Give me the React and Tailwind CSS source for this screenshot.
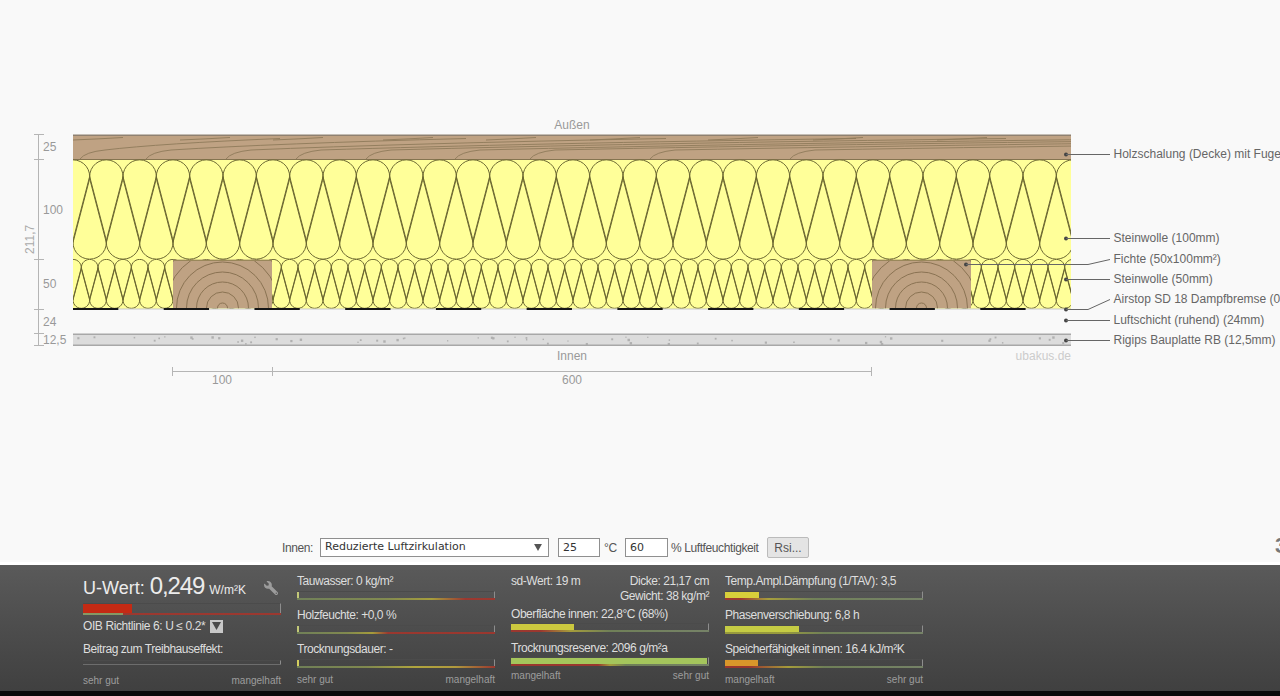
import React from "react";
import { FaWrench } from "react-icons/fa";

const L = 73, R = 1071;
const range = (n) => Array.from({ length: n }, (_, i) => i);

function tearDown(cx, r, cy, tip) {
  const s = r / (tip - cy);
  const c = Math.sqrt(1 - s * s);
  return `M${cx - r * c} ${cy + r * s} A${r} ${r} 0 1 1 ${cx + r * c} ${cy + r * s} L${cx} ${tip} Z`;
}
function tearUp(cx, r, cy, tip) {
  const s = r / (cy - tip);
  const c = Math.sqrt(1 - s * s);
  return `M${cx - r * c} ${cy - r * s} A${r} ${r} 0 1 0 ${cx + r * c} ${cy - r * s} L${cx} ${tip} Z`;
}

function rand(seed) {
  const x = Math.sin(seed * 12.9898) * 43758.5453;
  return x - Math.floor(x);
}

const grainLong = [
  [80, 200], [146, 320], [226, 440], [296, 560], [366, 640],
  [455, 720], [530, 820], [650, 900], [790, 1000],
].map(([x0, span]) => {
  const end = x0 + span;
  return `M${x0} 159 Q${x0 + 5} 152 ${x0 + 25} 150 Q${x0 + span * 0.4} 143.5 ${end} 138.5`;
});
const grainShort = [123, 230, 323, 433, 536, 640, 758, 863, 987].map((e) => `M${e - 50} 140 Q${e - 25} 139 ${e} 137.5`);

function Stud({ x }) {
  const cx = x + 49.5;
  return (
    <g clipPath={`url(#stud${x})`}>
      <rect x={x} y="259.5" width="99" height="49" fill="#bfa283" />
      {[5, 16, 26, 36, 46, 57, 68].map((r) => (
        <circle key={r} cx={cx} cy="308" r={r} fill="none" stroke="#8a7353" strokeWidth="1" />
      ))}
      <rect x={x} y="259.5" width="99" height="1.5" fill="#99875a" />
    </g>
  );
}

function Diagram() {
  const top100 = range(31).map((i) => L + (i * 100) / 3);
  const bot100 = range(30).map((i) => L + 16.67 + (i * 100) / 3);
  const top50 = range(61).map((i) => L + (i * 50) / 3);
  const bot50 = range(60).map((i) => L + 8.33 + (i * 50) / 3);
  const dashes = range(11).map((i) => L + i * 90.73);
  const dots = range(66).map((i) => ({
    x: L + 4 + rand(i + 1) * 990,
    y: 336 + rand(i + 50) * 7.5,
    s: 1.2 + rand(i + 99) * 1.3,
  }));
  const labels = [
    ["Holzschalung (Decke) mit Fuge", 154, 1066, 154.5],
    ["Steinwolle (100mm)", 238, 1066, 238.5],
    ["Steinwolle (50mm)", 279, 1066, 279.5],
    ["Luftschicht (ruhend) (24mm)", 320, 1066, 320.5],
    ["Rigips Bauplatte RB (12,5mm)", 340, 1066, 340.5],
  ];
  const dims = [
    ["25", 147],
    ["100", 210],
    ["50", 284],
    ["24", 322],
  ];
  return (
    <svg width="1280" height="400" viewBox="0 0 1280 400" className="block shrink-0 text-xs">
      <defs>
        <clipPath id="c100"><rect x={L} y="159.5" width={R - L} height="100.5" /></clipPath>
        <clipPath id="c50"><rect x={L} y="259" width={R - L} height="50" /></clipPath>
        <clipPath id="stud173"><rect x="173" y="259.5" width="99" height="49" /></clipPath>
        <clipPath id="stud872"><rect x="872" y="259.5" width="99" height="49" /></clipPath>
        <clipPath id="wood"><rect x={L} y="135" width={R - L} height="25" /></clipPath>
      </defs>

      <text x="572" y="129" textAnchor="middle" fill="#999">Außen</text>

      {/* Holzschalung */}
      <rect x={L} y="135" width={R - L} height="25" fill="#bfa283" />
      <g clipPath="url(#wood)" fill="none" stroke="#8f7b5a" strokeWidth="0.9">
        {grainLong.map((d, i) => <path key={i} d={d} />)}
        {grainShort.map((d, i) => <path key={i} d={d} />)}
      </g>
      <rect x={L} y="134.5" width={R - L} height="1.5" fill="#8f8171" />
      <rect x={L} y="159" width={R - L} height="1" fill="#857450" />

      {/* Steinwolle 100 */}
      <rect x={L} y="160" width={R - L} height="100" fill="#ffff99" />
      <g clipPath="url(#c100)" fill="none" stroke="#6b6732" strokeWidth="1">
        {top100.map((x) => <path key={x} d={tearDown(x, 16.67, 176.5, 242.5)} />)}
        {bot100.map((x) => <path key={x} d={tearUp(x, 16.67, 242.5, 176.5)} />)}
      </g>

      {/* Steinwolle 50 */}
      <rect x={L} y="259" width={R - L} height="50" fill="#ffff99" />
      <g clipPath="url(#c50)" fill="none" stroke="#6b6732" strokeWidth="1">
        {top50.map((x) => <path key={x} d={tearDown(x, 8.33, 267.7, 300)} />)}
        {bot50.map((x) => <path key={x} d={tearUp(x, 8.33, 300, 267.7)} />)}
      </g>
      <Stud x={173} />
      <Stud x={872} />

      {/* Dampfbremse */}
      <rect x={L} y="308.5" width={R - L} height="1" fill="#c9c9c9" />
      {dashes.map((x) => <rect key={x} x={x} y="308" width="45.3" height="2" fill="#161616" />)}

      {/* Gipsplatte */}
      <rect x={L} y="334" width={R - L} height="12" fill="#dcdcdc" />
      {dots.map((d, i) => <rect key={i} x={d.x} y={d.y} width={d.s} height={d.s} fill="#b0b0b0" />)}
      <rect x={L} y="333.5" width={R - L} height="1.5" fill="#a8a8a8" />
      <rect x={L} y="344.5" width={R - L} height="1.5" fill="#a8a8a8" />

      {/* Höhenmaße */}
      <line x1="38.5" y1="134" x2="38.5" y2="346" stroke="#b5b5b5" />
      {[134.5, 159.5, 259.5, 309.5, 333.5, 345.5].map((y) => (
        <line key={y} x1="34" y1={y} x2="44" y2={y} stroke="#b5b5b5" />
      ))}
      {dims.map(([t, y]) => <text key={t} x="43" y={y + 4} fill="#999">{t}</text>)}
      <text x="43" y="344" fill="#999">12,5</text>
      <text x="0" y="0" fill="#aaa" transform="translate(34 254) rotate(-90)">211,7</text>

      <text x="572" y="360" textAnchor="middle" fill="#999">Innen</text>
      <text x="1071" y="360" textAnchor="end" fill="#ccc">ubakus.de</text>

      {/* Breitenmaße */}
      <line x1="172" y1="371.5" x2="872" y2="371.5" stroke="#b5b5b5" />
      {[172.5, 272.5, 871.5].map((x) => <line key={x} x1={x} y1="367" x2={x} y2="376" stroke="#b5b5b5" />)}
      <text x="222" y="384" textAnchor="middle" fill="#999">100</text>
      <text x="572" y="384" textAnchor="middle" fill="#999">600</text>

      {/* Beschriftung */}
      {labels.map(([t, y, x, ly]) => (
        <g key={t}>
          <circle cx={x} cy={ly} r="2" fill="#444" />
          <line x1={x} y1={ly} x2="1110" y2={ly} stroke="#666" />
          <text x="1113.5" y={y + 4} fill="#666">{t}</text>
        </g>
      ))}
      <circle cx="966" cy="264.5" r="2" fill="#444" />
      <path d="M966 264.5 H1088 L1110 259.5" fill="none" stroke="#666" />
      <text x="1113.5" y="263" fill="#666">Fichte (50x100mm²)</text>
      <circle cx="1066" cy="309.5" r="2" fill="#444" />
      <path d="M1066 309.5 H1088 L1110 299.5" fill="none" stroke="#666" />
      <text x="1113.5" y="303" fill="#666">Airstop SD 18 Dampfbremse (0,2m)</text>
    </svg>
  );
}

function Meter({ width, bar, stripe, track = "h-[7px]", stripeH = "h-[2px]" }) {
  return (
    <div className="flex flex-col w-full">
      <div className={`${track} flex border-t border-[#4b4b4b] border-r border-r-[#8d8d8d]`}>
        <div className={`h-full ${bar}`} style={{ width }} />
      </div>
      <div className={`${stripeH} opacity-85 ${stripe}`} />
    </div>
  );
}

function Row({ label, ...meter }) {
  return (
    <div className="flex flex-col">
      <div className="h-4 leading-4 whitespace-nowrap">{label}</div>
      <div className="mt-[2px] mb-[7px]"><Meter {...meter} /></div>
    </div>
  );
}

function Legend({ left, right }) {
  return (
    <div className="flex justify-between text-[10px] leading-[10px] tracking-normal text-[#9d9d9d]">
      <span>{left}</span>
      <span>{right}</span>
    </div>
  );
}

function BottomBar() {
  return (
    <div className="h-[126px] shrink-0 bg-gradient-to-b from-[#5a5a5a] to-[#404040] flex gap-4 pl-[83px] pt-2 text-xs tracking-[-0.45px] text-[#dedede]">
      {/* Spalte 1 */}
      <div className="w-[198px] flex flex-col">
        <div className="h-[30px] flex items-center justify-between">
          <div className="flex items-baseline whitespace-nowrap tracking-normal text-[#ececec]">
            <span className="text-lg">U-Wert:&nbsp;</span>
            <span className="text-2xl leading-6 tracking-[-1.1px]">0,249</span>
            <span className="text-xs ml-[5px]">W/m²K</span>
          </div>
          <FaWrench className="text-[#9c9c9c] -scale-x-100 mr-[3px]" size={14} />
        </div>
        <Meter
          width="49px"
          bar="bg-[#c42a14]"
          track="h-[10px]"
          stripe="bg-[linear-gradient(to_right,#8fa568_0%,#8fa568_20%,#a8342a_20%,#a8342a_100%)]"
        />
        <div className="mt-[3px] h-4 leading-4 flex items-center gap-[5px] whitespace-nowrap tracking-[-0.4px]">
          <span>OIB Richtlinie 6: U ≤ 0.2*</span>
          <span className="w-[13px] h-[13px] bg-[#c8c8c8] flex items-center justify-center">
            <svg width="9" height="8" viewBox="0 0 9 8"><path d="M0 0H9L4.5 8Z" fill="#4a4a4a" /></svg>
          </span>
        </div>
        <div className="mt-[7px] h-4 leading-4 whitespace-nowrap">Beitrag zum Treibhauseffekt:</div>
        <div className="mt-[3px] mb-[11px]">
          <Meter width="0" bar="" track="h-[4px]" stripeH="h-[1px]" stripe="bg-[#747474]" />
        </div>
        <Legend left="sehr gut" right="mangelhaft" />
      </div>

      {/* Spalte 2 */}
      <div className="w-[198px] flex flex-col">
        <Row label="Tauwasser: 0 kg/m²" width="2px" bar="bg-[#c2c878]" stripe="bg-[linear-gradient(to_right,#76895a_0%,#8a9450_45%,#b5ab38_68%,#a8342a_85%,#a8342a_100%)]" />
        <Row label="Holzfeuchte: +0,0 %" width="2px" bar="bg-[#c2c878]" stripe="bg-[linear-gradient(to_right,#76895a_0%,#8a9450_25%,#b5ab38_38%,#a8342a_46%,#a8342a_100%)]" />
        <Row label="Trocknungsdauer: -" width="2px" bar="bg-[#d4cf5e]" stripe="bg-[linear-gradient(to_right,#76895a_0%,#8a9450_35%,#c2b53c_60%,#c2a83c_80%,#a8342a_100%)]" />
        <Legend left="sehr gut" right="mangelhaft" />
      </div>

      {/* Spalte 3 */}
      <div className="w-[198px] flex flex-col">
        <div className="h-4 leading-4 flex justify-between whitespace-nowrap">
          <span>sd-Wert: 19 m</span>
          <span>Dicke: 21,17 cm</span>
        </div>
        <div className="h-[15px] leading-[15px] text-right whitespace-nowrap">Gewicht: 38 kg/m²</div>
        <div className="mt-[2px] flex flex-col">
          <div className="h-4 leading-4 whitespace-nowrap">Oberfläche innen: 22,8°C (68%)</div>
          <div className="mt-[1px] mb-[7px]">
            <Meter width="63px" bar="bg-[#cbc83f]" stripe="bg-[linear-gradient(to_right,#a8342a_0%,#a8342a_15%,#b5ab38_30%,#76895a_50%,#7d8c6c_100%)]" />
          </div>
          <div className="h-4 leading-4 mt-[1px] whitespace-nowrap">Trocknungsreserve: 2096 g/m²a</div>
          <div className="mt-[1px] mb-[5px]">
            <Meter width="196px" bar="bg-[#a4c55c]" stripe="bg-[linear-gradient(to_right,#a8342a_0%,#a8342a_44%,#b5ab38_50%,#76895a_58%,#7d8c6c_100%)]" />
          </div>
        </div>
        <Legend left="mangelhaft" right="sehr gut" />
      </div>

      {/* Spalte 4 */}
      <div className="w-[198px] flex flex-col">
        <Row label="Temp.Ampl.Dämpfung (1/TAV): 3,5" width="34px" bar="bg-[#d8cf3a]" stripe="bg-[linear-gradient(to_right,#a8342a_0%,#a8342a_8%,#b5ab38_22%,#76895a_45%,#7d8c6c_100%)]" />
        <Row label="Phasenverschiebung: 6,8 h" width="74px" bar="bg-[#c5cc44]" stripe="bg-[linear-gradient(to_right,#a5a83a_0%,#a5a83a_30%,#76895a_50%,#7d8c6c_100%)]" />
        <Row label="Speicherfähigkeit innen: 16.4 kJ/m²K" width="33px" bar="bg-[#d9962a]" stripe="bg-[linear-gradient(to_right,#a8342a_0%,#a8342a_12%,#b5ab38_32%,#76895a_50%,#7d8c6c_100%)]" />
        <Legend left="mangelhaft" right="sehr gut" />
      </div>
    </div>
  );
}

function Controls() {
  const field = "h-[19px] border border-[#8f8f8f] bg-white font-['DejaVu_Sans',sans-serif] text-[11px] text-[#333] outline-none";
  return (
    <div className="relative flex items-center h-[21px] pl-[282px] text-[#555] text-xs tracking-[-0.4px]">
      <span className="w-[38px]">Innen:</span>
      <div className={`${field} w-[229px] flex items-center justify-between pl-1 pr-[6px] tracking-normal`}>
        <span>Reduzierte Luftzirkulation</span>
        <svg width="8" height="7" viewBox="0 0 9 8"><path d="M0 0H9L4.5 8Z" fill="#555" /></svg>
      </div>
      <input readOnly defaultValue="25" className={`${field} w-[42px] ml-[9px] pl-1 tracking-normal`} />
      <span className="w-[25px] pl-1">°C</span>
      <input readOnly defaultValue="60" className={`${field} w-[43px] pl-1 tracking-normal`} />
      <span className="w-[99px] pl-[3px] whitespace-nowrap">% Luftfeuchtigkeit</span>
      <button className="w-[42px] h-[21px] border border-[#bbb] rounded-[2px] bg-[#e4e4e4] text-[#555] text-xs tracking-normal">Rsi...</button>
      <span className="absolute left-[1275px] top-[-3px] text-[22px] leading-6 font-bold text-[#777]">3</span>
    </div>
  );
}

export default function App() {
  return (
    <div className="w-[1280px] h-[696px] overflow-hidden flex flex-col font-['Liberation_Sans',Arial,sans-serif] bg-[#f9f9f9]">
      <div className="h-[565px] shrink-0 flex flex-col border-b-[3px] border-white">
        <Diagram />
        <div className="mt-auto pb-[4px]"><Controls /></div>
      </div>
      <BottomBar />
      <div className="h-[5px] bg-[#0a0a0a]" />
    </div>
  );
}
